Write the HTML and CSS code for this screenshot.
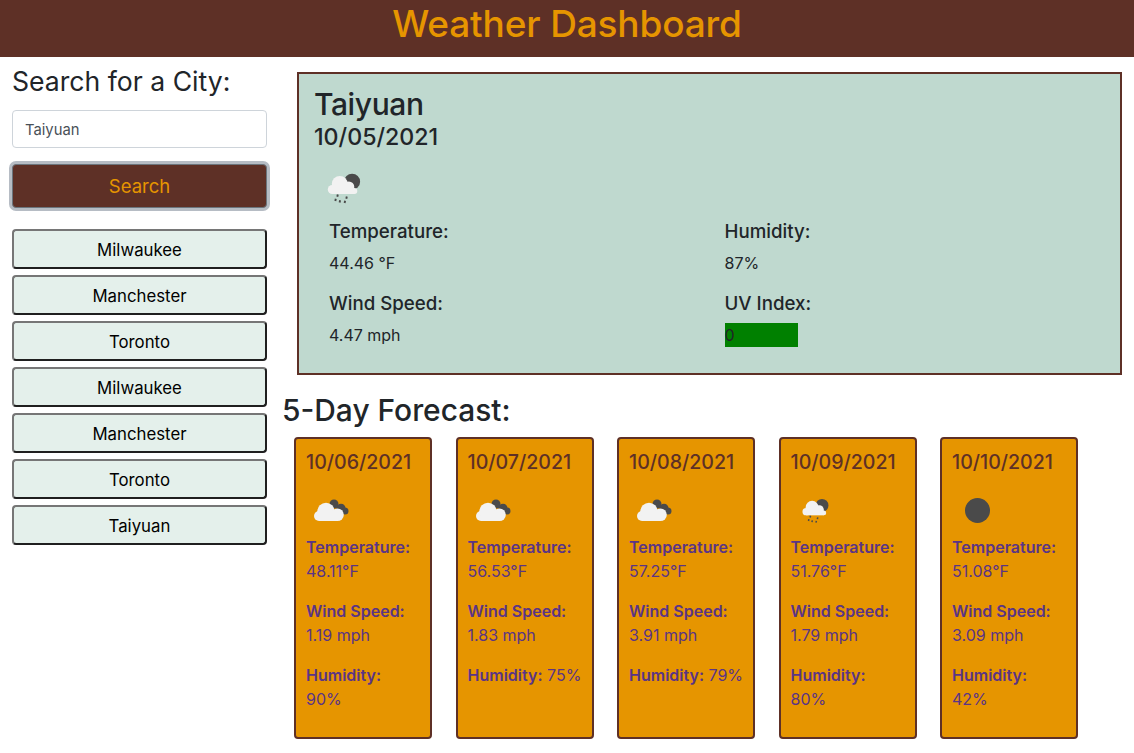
FILE: index.html
```html
<!DOCTYPE html>
<html lang="en">
<head>
<meta charset="utf-8">
<title>Weather Dashboard</title>
<link rel="stylesheet" href="styles.css">
</head>
<body>
<svg class="defs" width="0" height="0" aria-hidden="true">
  <defs>
    <symbol id="cloud" viewBox="-1 -1 36 24">
      <circle cx="20" cy="5" r="4.500" fill="#4a4a4a"/>
      <circle cx="27" cy="9.300" r="4.500" fill="#4a4a4a"/>
      <circle cx="31" cy="12" r="3.500" fill="#4a4a4a"/>
      <path d="M24 9.200h3v6h-3z" fill="#4a4a4a"/>
      <g fill="#f2f2f2">
        <circle cx="5" cy="17" r="5"/>
        <circle cx="12" cy="12.500" r="8.700"/>
        <circle cx="23.500" cy="15.700" r="6.300"/>
        <rect x="5" y="14" width="19" height="8"/>
      </g>
    </symbol>
    <symbol id="rain" viewBox="-1.800 -3 36 36">
      <circle cx="24.300" cy="8.700" r="8" fill="#4a4a4a"/>
      <g fill="#f2f2f2">
        <circle cx="4.500" cy="16.500" r="4.500"/>
        <circle cx="12" cy="11" r="8"/>
        <circle cx="21" cy="14" r="5.500"/>
        <circle cx="26.500" cy="18" r="3"/>
        <rect x="4.500" y="15" width="22" height="6"/>
      </g>
      <path d="M10 21.500l-.5 2.200M19 23.500l-.5 2.200M8 25.800l-.5 2.200M12.300 27.300l-.5 2.200M17.300 27.800l-.5 2.200" stroke="#4a4a4a" stroke-width="1.900" fill="none"/>
    </symbol>
  </defs>
</svg>
<header class="topbar"><h1 class="title">Weather Dashboard</h1></header>
<div class="layout">
  <aside class="sidebar">
    <h2 class="search-title">Search for a City:</h2>
    <input class="search-input" type="text" value="Taiyuan">
    <button class="search-btn" type="button">Search</button>
    <ul class="history">
      <li><button class="city" type="button">Milwaukee</button></li>
      <li><button class="city" type="button">Manchester</button></li>
      <li><button class="city" type="button">Toronto</button></li>
      <li><button class="city" type="button">Milwaukee</button></li>
      <li><button class="city" type="button">Manchester</button></li>
      <li><button class="city" type="button">Toronto</button></li>
      <li><button class="city" type="button">Taiyuan</button></li>
    </ul>
  </aside>
  <main class="main">
    <section class="current">
      <h2 class="city-name">Taiyuan</h2>
      <h3 class="city-date">10/05/2021</h3>
      <div class="current-icon"><svg class="icon-rain-lg"><use href="#rain"/></svg></div>
      <div class="stats">
        <div class="stat"><h4 class="stat-label">Temperature:</h4><p class="stat-value">44.46 °F</p></div>
        <div class="stat"><h4 class="stat-label">Humidity:</h4><p class="stat-value">87%</p></div>
        <div class="stat"><h4 class="stat-label">Wind Speed:</h4><p class="stat-value">4.47 mph</p></div>
        <div class="stat"><h4 class="stat-label">UV Index:</h4><p class="uv">0</p></div>
      </div>
    </section>
    <h2 class="forecast-title">5-Day Forecast:</h2>
    <div class="forecast">
      <article class="day">
        <h4 class="day-date">10/06/2021</h4>
        <div class="day-icon"><svg class="icon-cloud"><use href="#cloud"/></svg></div>
        <p class="line"><b>Temperature:</b><br>48.11°F</p>
        <p class="line"><b>Wind Speed:</b><br>1.19 mph</p>
        <p class="line"><b>Humidity:</b><br>90%</p>
      </article>
      <article class="day">
        <h4 class="day-date">10/07/2021</h4>
        <div class="day-icon"><svg class="icon-cloud"><use href="#cloud"/></svg></div>
        <p class="line"><b>Temperature:</b><br>56.53°F</p>
        <p class="line"><b>Wind Speed:</b><br>1.83 mph</p>
        <p class="line"><b>Humidity:</b> 75%</p>
      </article>
      <article class="day">
        <h4 class="day-date">10/08/2021</h4>
        <div class="day-icon"><svg class="icon-cloud"><use href="#cloud"/></svg></div>
        <p class="line"><b>Temperature:</b><br>57.25°F</p>
        <p class="line"><b>Wind Speed:</b><br>3.91 mph</p>
        <p class="line"><b>Humidity:</b> 79%</p>
      </article>
      <article class="day">
        <h4 class="day-date">10/09/2021</h4>
        <div class="day-icon"><svg class="icon-rain"><use href="#rain"/></svg></div>
        <p class="line"><b>Temperature:</b><br>51.76°F</p>
        <p class="line"><b>Wind Speed:</b><br>1.79 mph</p>
        <p class="line"><b>Humidity:</b><br>80%</p>
      </article>
      <article class="day">
        <h4 class="day-date">10/10/2021</h4>
        <div class="day-icon"><span class="icon-clear"></span></div>
        <p class="line"><b>Temperature:</b><br>51.08°F</p>
        <p class="line"><b>Wind Speed:</b><br>3.09 mph</p>
        <p class="line"><b>Humidity:</b><br>42%</p>
      </article>
    </div>
  </main>
</div>
</body>
</html>
```
FILE: styles.css
```css
* { box-sizing: border-box; }
html, body { margin: 0; padding: 0; }
body {
  font-family: Inter, "Liberation Sans", sans-serif;
  font-size: 16px;
  line-height: 1.5;
  color: #212529;
  background: #fff;
  overflow: hidden;
}
.defs { position: absolute; }
h1, h2, h3, h4, p, ul { margin: 0; padding: 0; font-weight: 500; }
.topbar { background: #5e3026; height: 57px; text-align: center; }
.title { font-size: 37px; line-height: 48px; color: #e69500; letter-spacing: -0.15px; }
.layout { display: flex; align-items: flex-start; }
.sidebar { width: 279px; padding: 0 12px; flex: none; }
.search-title { font-size: 26.600px; line-height: 32px; padding-top: 8px; margin-bottom: 13px; font-weight: 400; }
.search-input {
  display: block; width: 100%; height: 38px; padding: 7px 12px 5px;
  font: 400 14.800px/24px Inter, sans-serif; color: #495057;
  background: #fff; border: 1px solid #ced4da; border-radius: 4px;
}
.search-btn {
  display: block; width: 100%; height: 44px; margin-top: 16px; padding: 0;
  font: 400 18.500px/24px Inter, sans-serif; color: #e69500;
  background: #5e3026; border: 1px solid #6c757d; border-radius: 4px;
  box-shadow: 0 0 0 3px #b6bcc4;
}
.history { list-style: none; margin-top: 21px; display: flex; flex-direction: column; gap: 6px; }
.city {
  display: block; width: 100%; height: 40px; padding: 2px 0 0;
  font: 400 16.800px/24px Inter, sans-serif; color: #000;
  background: #e4f0eb; border: 2px solid; border-color: #767676 #1f1f1f #1f1f1f #767676;
  border-radius: 4px;
}
.main { flex: 1; min-width: 0; padding: 15px 12px 0 4px; }
.current {
  margin-left: 14px; height: 303px; padding: 12px 15px;
  background: #bfd9cf; border: 2px solid #5e3026;
}
.city-name { font-size: 30px; line-height: 36px; letter-spacing: -0.4px; }
.city-date { font-size: 23.200px; line-height: 29px; margin-top: 1px; }
.current-icon { display: flex; align-items: center; justify-content: center; width: 50px; height: 50px; margin: 11px 0 6px 5px; }
.icon-rain-lg { width: 36px; height: 36px; }
.stats { display: grid; grid-template-columns: 395.500px 1fr; margin-left: 15px; }
.stat { height: 72px; }
.stat-label { font-size: 18.700px; line-height: 26px; }
.stat-value { font-size: 16px; font-weight: 400; line-height: 24px; margin-top: 6px; }
.uv { width: 73px; height: 24px; line-height: 24px; margin-top: 6px; background: #008000; font-weight: 400; }
.forecast-title { font-size: 29.900px; line-height: 36px; margin-top: 17px; margin-left: -1px; }
.forecast { display: flex; gap: 23.500px; margin: 9px 0 0 11px; }
.day {
  width: 138px; height: 302px; flex: none; padding: 10px 0 0 10px;
  background: #e69500; border: 2px solid #5e3026; border-radius: 4px;
}
.day-date { font-size: 19.600px; line-height: 27px; color: #5e3026; font-weight: 500; }
.day-icon { display: flex; align-items: center; justify-content: center; width: 50px; height: 50px; margin-top: 9px; }
.icon-cloud { width: 36px; height: 24px; }
.icon-rain { width: 29px; height: 29px; }
.icon-clear { display: block; width: 25px; height: 25px; border-radius: 50%; background: #4a4a4a; }
.line { font-size: 16px; font-weight: 400; line-height: 24px; color: #5a3486; margin-bottom: 16px; white-space: nowrap; }
.line b { font-weight: 600; }
```
